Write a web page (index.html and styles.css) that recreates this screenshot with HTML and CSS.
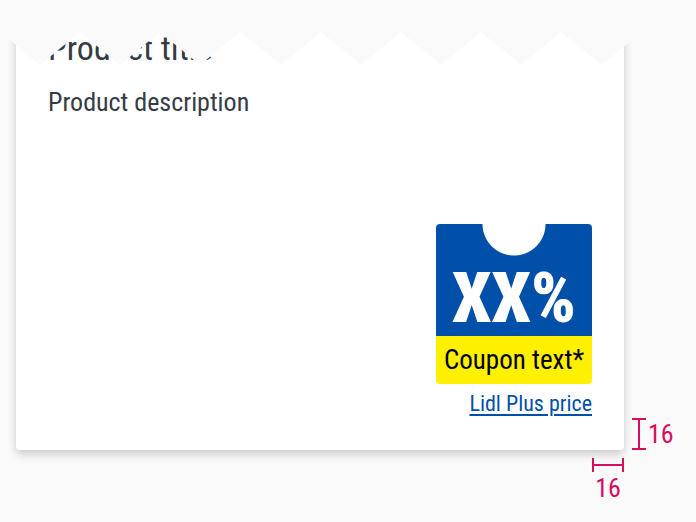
FILE: index.html
```html
<!DOCTYPE html>
<html lang="en">
<head>
  <meta charset="utf-8">
  <meta name="viewport" content="width=device-width, initial-scale=1">
  <title>Product card</title>
  <link rel="stylesheet" href="styles.css">
</head>
<body>
  <main class="spec">
    <article class="card">
      <h1 class="title">Product title</h1>
      <p class="description">Product description</p>
      <div class="offer">
        <div class="coupon">
          <div class="discount">XX%</div>
          <div class="coupon-text">Coupon text*</div>
        </div>
        <a class="price-link" href="#">Lidl Plus price</a>
      </div>
    </article>
    <div class="measure measure-bottom">
      <svg width="14" height="32" viewBox="0 0 14 32" aria-hidden="true"><path d="M0 1H14M0 31H14M7 1V31"/></svg>
      <span>16</span>
    </div>
    <div class="measure measure-right">
      <svg width="32" height="14" viewBox="0 0 32 14" aria-hidden="true"><path d="M1 0V14M31 0V14M1 7H31"/></svg>
      <span>16</span>
    </div>
    <svg class="tear" viewBox="0 0 696 66" preserveAspectRatio="none" aria-hidden="true">
      <path d="M0 0V32L40 65L80 32L120 65L160 32L200 65L240 32L281 65L321 32L361 65L401 32L441 65L481 32L521 65L561 32L602 65L642 32H696V0Z"/>
    </svg>
  </main>
</body>
</html>
```
FILE: styles.css
```css
* {
  box-sizing: border-box;
}

body {
  margin: 0;
  background: #fafafa;
  color: #353b45;
  font-family: "Roboto Condensed", "Liberation Sans", sans-serif;
  font-size: 26px;
  line-height: 32px;
}

.spec {
  position: relative;
  display: grid;
  grid-template-columns: 1fr 64px;
  column-gap: 8px;
  row-gap: 8px;
  padding-left: 16px;
}

.card {
  display: flex;
  flex-direction: column;
  padding: 28px 32px 32px;
  background: #fff;
  border-radius: 4px;
  box-shadow: 0 4px 10px rgba(0, 0, 0, 0.2);
}

.title {
  margin: 0 0 18px;
  font-size: 34px;
  font-weight: 400;
  line-height: 40px;
}

.description {
  margin: 0 0 106px;
}

.offer {
  display: flex;
  flex-direction: column;
  align-items: flex-end;
  gap: 6px;
}

.coupon {
  width: 156px;
  overflow: hidden;
  border-radius: 4px;
  text-align: center;
}

.discount {
  padding: 42px 0 6px;
  background: radial-gradient(circle at 50% 0, #fff 31px, #0050aa 32px);
  color: #fff;
  font-size: 70px;
  font-weight: 900;
  line-height: 64px;
}

.coupon-text {
  padding: 8px 0;
  background: #fff000;
  color: #000;
  font-size: 27px;
}

.price-link {
  color: #0050aa;
  font-size: 22px;
  line-height: 28px;
  text-decoration-thickness: 2px;
  text-underline-offset: 3px;
}

.measure {
  display: flex;
  align-items: center;
  color: #d90d5e;
}

.measure svg {
  fill: none;
  stroke: currentColor;
  stroke-width: 2;
}

.measure-bottom {
  align-self: end;
  gap: 2px;
}

.measure-right {
  flex-direction: column;
  justify-self: end;
  width: 32px;
}

.tear {
  position: absolute;
  top: 0;
  left: 0;
  width: 100%;
  height: 66px;
  fill: #fafafa;
}
```
